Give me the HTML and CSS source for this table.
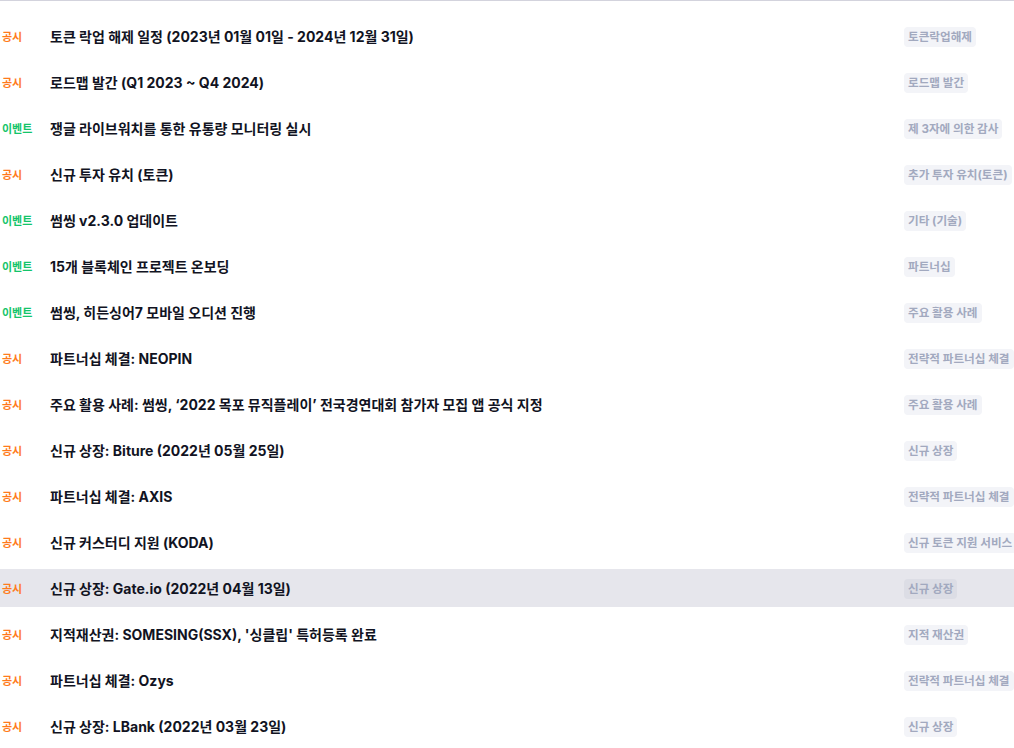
FILE: index.html
```html
<!DOCTYPE html>
<html lang="ko">
<head>
<meta charset="utf-8">
<title>공시 목록</title>
<link rel="stylesheet" href="styles.css">
</head>
<body>
<div class="list">
  <div class="row"><span class="kind notice">공시</span><span class="title">토큰 락업 해제 일정 (2023년 01월 01일 - 2024년 12월 31일)</span><span class="tagcell"><span class="tag">토큰락업해제</span></span></div>
  <div class="row"><span class="kind notice">공시</span><span class="title">로드맵 발간 (Q1 2023 ~ Q4 2024)</span><span class="tagcell"><span class="tag">로드맵 발간</span></span></div>
  <div class="row"><span class="kind event">이벤트</span><span class="title">쟁글 라이브워치를 통한 유통량 모니터링 실시</span><span class="tagcell"><span class="tag">제 3자에 의한 감사</span></span></div>
  <div class="row"><span class="kind notice">공시</span><span class="title">신규 투자 유치 (토큰)</span><span class="tagcell"><span class="tag">추가 투자 유치(토큰)</span></span></div>
  <div class="row"><span class="kind event">이벤트</span><span class="title">썸씽 v2.3.0 업데이트</span><span class="tagcell"><span class="tag">기타 (기술)</span></span></div>
  <div class="row"><span class="kind event">이벤트</span><span class="title">15개 블록체인 프로젝트 온보딩</span><span class="tagcell"><span class="tag">파트너십</span></span></div>
  <div class="row"><span class="kind event">이벤트</span><span class="title">썸씽, 히든싱어7 모바일 오디션 진행</span><span class="tagcell"><span class="tag">주요 활용 사례</span></span></div>
  <div class="row"><span class="kind notice">공시</span><span class="title">파트너십 체결: NEOPIN</span><span class="tagcell"><span class="tag">전략적 파트너십 체결</span></span></div>
  <div class="row"><span class="kind notice">공시</span><span class="title">주요 활용 사례: 썸씽, ‘2022 목포 뮤직플레이’ 전국경연대회 참가자 모집 앱 공식 지정</span><span class="tagcell"><span class="tag">주요 활용 사례</span></span></div>
  <div class="row"><span class="kind notice">공시</span><span class="title">신규 상장: Biture (2022년 05월 25일)</span><span class="tagcell"><span class="tag">신규 상장</span></span></div>
  <div class="row"><span class="kind notice">공시</span><span class="title">파트너십 체결: AXIS</span><span class="tagcell"><span class="tag">전략적 파트너십 체결</span></span></div>
  <div class="row"><span class="kind notice">공시</span><span class="title">신규 커스터디 지원 (KODA)</span><span class="tagcell"><span class="tag">신규 토큰 지원 서비스</span></span></div>
  <div class="row active"><span class="kind notice">공시</span><span class="title">신규 상장: Gate.io (2022년 04월 13일)</span><span class="tagcell"><span class="tag">신규 상장</span></span></div>
  <div class="row"><span class="kind notice">공시</span><span class="title">지적재산권: SOMESING(SSX), '싱클립' 특허등록 완료</span><span class="tagcell"><span class="tag">지적 재산권</span></span></div>
  <div class="row"><span class="kind notice">공시</span><span class="title">파트너십 체결: Ozys</span><span class="tagcell"><span class="tag">전략적 파트너십 체결</span></span></div>
  <div class="row"><span class="kind notice">공시</span><span class="title">신규 상장: LBank (2022년 03월 23일)</span><span class="tagcell"><span class="tag">신규 상장</span></span></div>
</div>
</body>
</html>
```
FILE: styles.css
```css
html, body {
  margin: 0;
  padding: 0;
  background: #ffffff;
  overflow: hidden;
}
body {
  font-family: Inter, "Noto Sans CJK KR", sans-serif;
  color: #111322;
}
.list {
  border-top: 1px solid #d3d3dd;
  padding-top: 16px;
  display: flex;
  flex-direction: column;
  gap: 8px;
  width: 100%;
  overflow: hidden;
}
.row {
  display: grid;
  grid-template-columns: 50px 854px 196px;
  align-items: center;
  height: 38px;
}
.row.active {
  background: #e6e6ec;
}
.kind {
  padding-left: 2px;
  font-size: 11px;
  font-weight: 700;
}
.kind.notice { color: #ff7b1c; }
.kind.event { color: #14c46a; }
.title {
  font-size: 14px;
  font-weight: 700;
  white-space: nowrap;
}
.tagcell {
  white-space: nowrap;
}
.tag {
  display: inline-block;
  background: #f3f4f8;
  color: #a2a9bf;
  font-size: 11.6px;
  font-weight: 700;
  line-height: 14px;
  padding: 3px 4px;
  border-radius: 4px;
}
.row.active .tag {
  background: #dcdde5;
}
```
